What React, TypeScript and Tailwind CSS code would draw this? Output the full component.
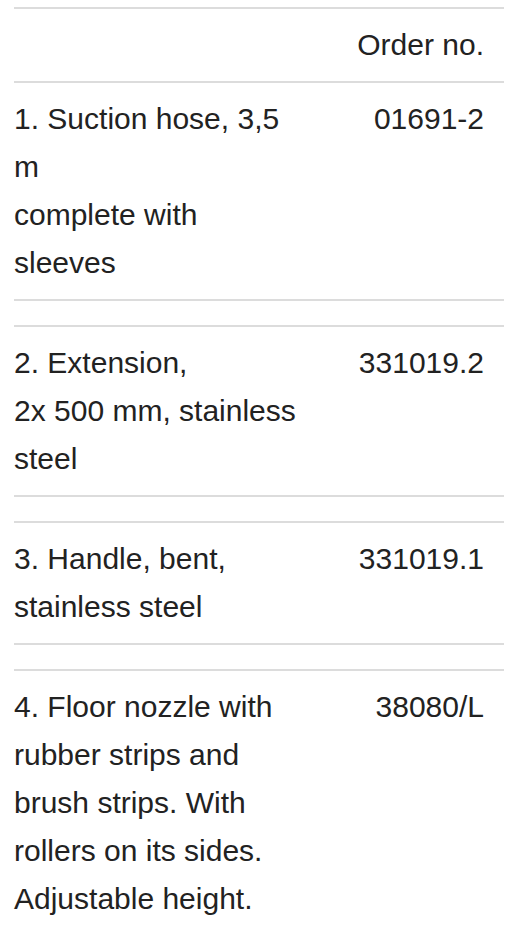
import React from 'react';

// One accessory line in the spare parts list
type Part = {
    desc: React.ReactNode;
    orderNo: string;
};

const parts: Part[] = [
    {
        desc: (
            <>
                1. Suction hose, 3,5 m
                <br />
                complete with sleeves
            </>
        ),
        orderNo: '01691-2',
    },
    {
        desc: (
            <>
                2. Extension,
                <br />
                2x 500 mm, stainless steel
            </>
        ),
        orderNo: '331019.2',
    },
    {
        desc: (
            <>
                3. Handle, bent,
                <br />
                stainless steel
            </>
        ),
        orderNo: '331019.1',
    },
    {
        desc: '4. Floor nozzle with rubber strips and brush strips. With rollers on its sides. Adjustable height.',
        orderNo: '38080/L',
    },
];

const Row: React.FC<{ left?: React.ReactNode; right?: React.ReactNode }> = ({ left, right }) => (
    <div className="flex border-t-2 border-[#dcdcdc] py-3">
        <div className="w-[288px] shrink-0">{left}</div>
        <div className="flex-1 text-right pr-5">{right}</div>
    </div>
);

export default function App() {
    return (
        <div className="min-h-screen bg-white pt-[7px]">
            <div
                className="ml-[14px] w-[490px] text-[30px] leading-[48px] text-[#222222]"
                style={{ fontFamily: '"Liberation Sans", Arial, sans-serif' }}
            >
                <Row right="Order no." />
                {parts.map((p, i) => (
                    <React.Fragment key={p.orderNo}>
                        {i > 0 && <div className="h-[26px] border-t-2 border-[#dcdcdc]" />}
                        <Row left={p.desc} right={p.orderNo} />
                    </React.Fragment>
                ))}
            </div>
        </div>
    );
}
